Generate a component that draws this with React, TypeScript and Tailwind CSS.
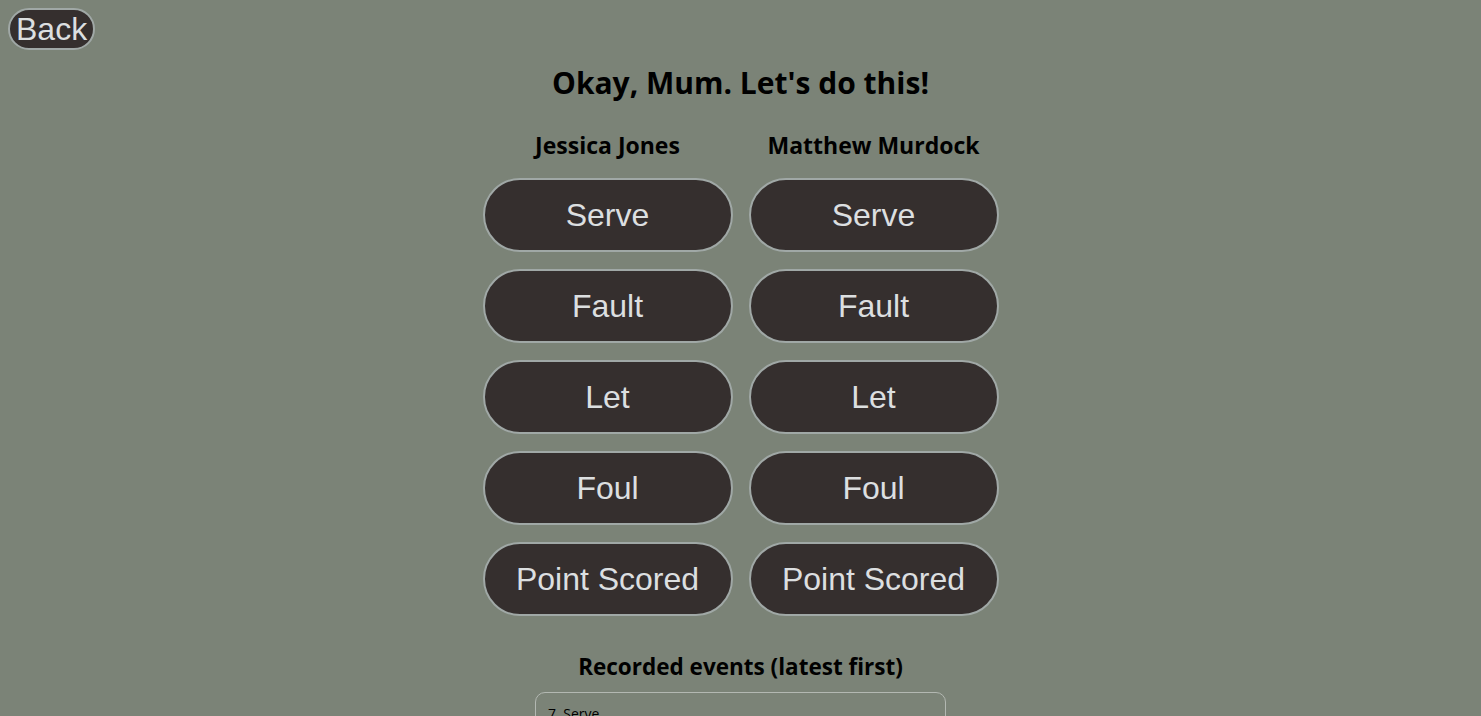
const actions = ['Serve', 'Fault', 'Let', 'Foul', 'Point Scored'];
const players = ['Jessica Jones', 'Matthew Murdock'];

function ActionButton({ label }: { label: string }) {
  return (
    <button className="h-[74px] w-[250px] rounded-full border-2 border-[#a0a8a6] bg-[#352f2e] text-[32px] text-[#dcdfe0] font-['Liberation_Sans',Arial,sans-serif]">
      {label}
    </button>
  );
}

export default function App() {
  return (
    <div className="min-h-[716px] bg-[#7b8377] font-['Open_Sans','Noto_Sans',sans-serif] text-black">
      <div className="p-2">
        <button className="h-[42px] rounded-full border-2 border-[#a0a8a6] bg-[#352f2e] px-[6px] text-[32px] leading-[36px] text-[#dcdfe0] font-['Liberation_Sans',Arial,sans-serif]">
          Back
        </button>
      </div>

      <div className="flex flex-col items-center">
        <h1 className="mt-[5px] text-[30px] font-bold leading-[40px]">Okay, Mum. Let's do this!</h1>

        <div className="mt-[27px] grid grid-cols-[250px_250px] gap-x-[16px] gap-y-[17px]">
          {players.map((p) => (
            <h2 key={p} className="mb-px text-center text-[23px] font-bold leading-[30px]">
              {p}
            </h2>
          ))}
          {actions.map((a) => (
            <div key={a} className="contents">
              <ActionButton label={a} />
              <ActionButton label={a} />
            </div>
          ))}
        </div>

        <h2 className="mt-[36px] text-[22.5px] font-bold leading-[30px]">Recorded events (latest first)</h2>
        <div className="mt-[10px] w-[411px] rounded-[10px] border border-[#b3b8b2] px-3 pt-[11px] pb-3 text-[14px] leading-[20px]">
          <div>7. Serve</div>
        </div>
      </div>
    </div>
  );
}
